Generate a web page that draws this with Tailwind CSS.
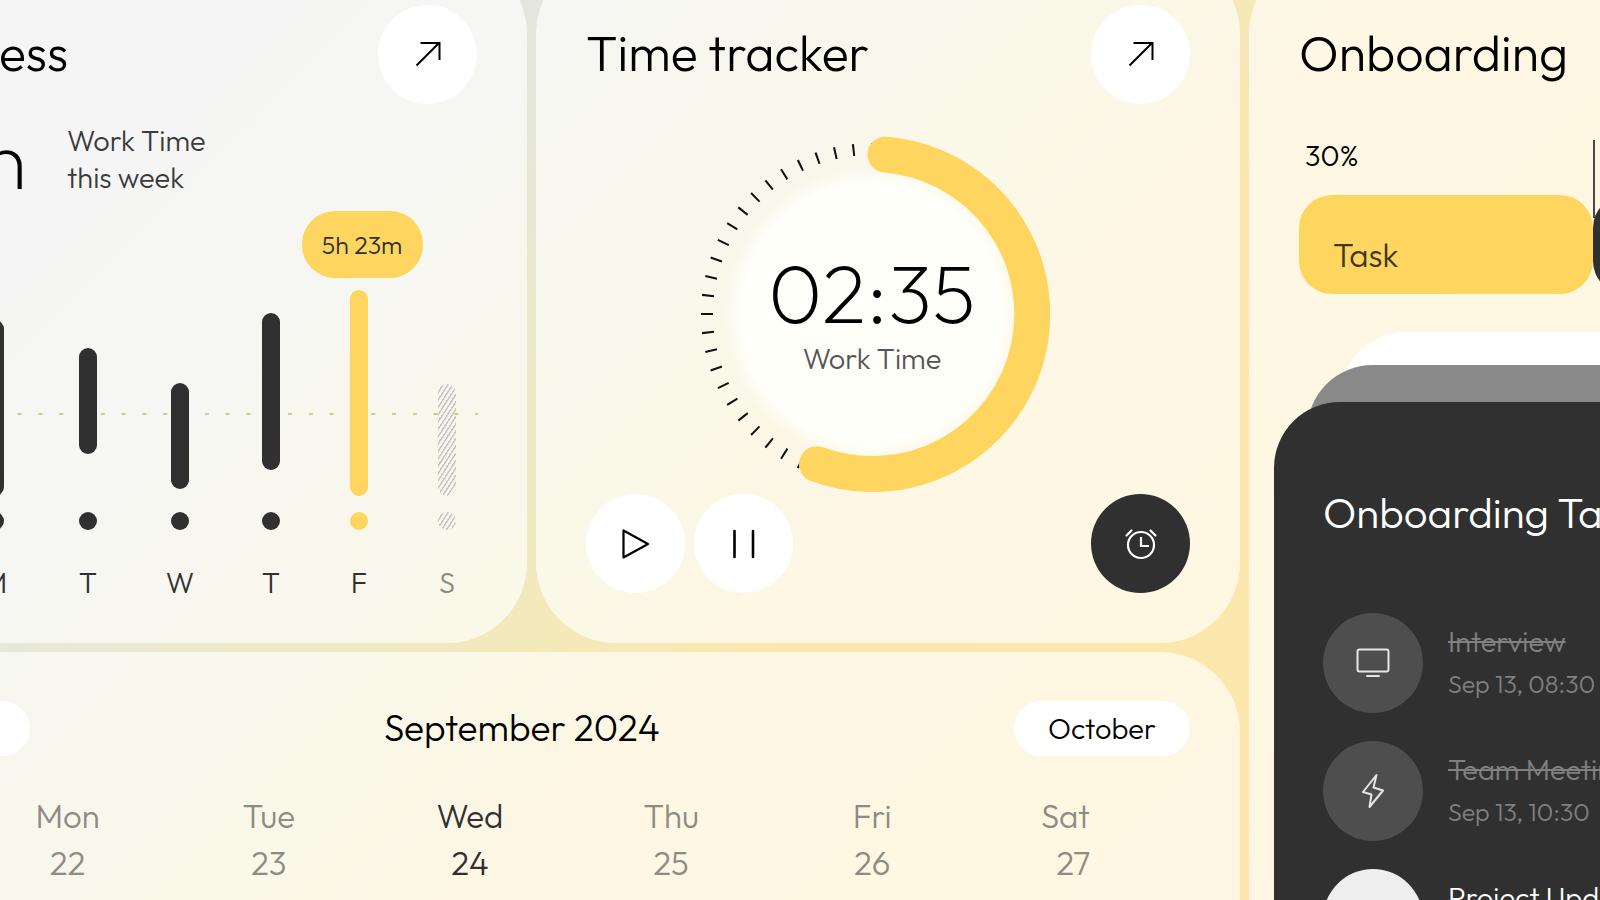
<!DOCTYPE html>
<html lang="en">
<head>
    <meta charset="UTF-8">
    <meta name="viewport" content="width=device-width, initial-scale=1.0">
    <title>HR Dashboard</title>
    <script src="https://cdn.jsdelivr.net/npm/@tailwindcss/browser@4"></script>
</head>
<body class="h-screen overflow-hidden font-['Outfit','Lato',sans-serif] font-light text-black bg-[linear-gradient(135deg,#e2e2e2_0%,#e4e4e0_20%,#e6e8d6_27%,#ece9c9_36%,#f3eaba_47%,#f5e9b6_51%,#fbe7ae_57%,#fde6ab_100%)]">
    <main class="grid grid-cols-3 gap-[9px] -mt-[46px] -ml-[177px] -mr-[353px]">

        <!-- Progress -->
        <section class="flex flex-col h-[689px] rounded-[80px] bg-white/65 p-[50px] pb-10">
            <header class="flex items-center justify-between h-[100px]">
                <h2 class="text-[50px] leading-[60px] pb-0.5">Progress</h2>
                <button aria-label="Open progress" class="size-[99px] rounded-full bg-white flex items-center justify-center">
                    <svg class="size-8" viewBox="0 0 32 32" fill="none" stroke="currentColor" stroke-width="2"><path d="M4.500 27.500 27 5M8.500 5H27.500V22"/></svg>
                </button>
            </header>
            <div class="flex items-end gap-10 mt-3">
                <p class="w-[154px] text-right text-[82px] leading-[86px] whitespace-nowrap font-extralight">6.1 h</p>
                <p class="text-[29px] leading-[37px] pb-1.5 text-[#3a3a3a]">Work Time<br>this week</p>
            </div>
            <div class="relative mt-auto -mx-3.5">
                <svg class="absolute left-0 top-[123px] w-full h-0.5" preserveAspectRatio="none"><line x1="13" y1="1" x2="619" y2="1" stroke="#cccb98" stroke-width="2" stroke-dasharray="4 16.800"/></svg>
                <div class="relative grid grid-cols-[88fr_96fr_90fr_94fr_88fr_88fr_88fr] text-[29px] leading-10 text-[#303030]">
                    <div class="flex flex-col items-center">
                        <div class="h-[206px] flex items-end"><div class="w-[18px] rounded-full bg-[#303030]" style="height: 80px; margin-bottom: 20px"></div></div>
                        <div class="size-[18px] rounded-full bg-[#303030] mt-4 mb-[33px]"></div>
                        <span>S</span>
                    </div>
                    <div class="flex flex-col items-center">
                        <div class="h-[206px] flex items-end"><div class="w-[18px] rounded-full bg-[#303030]" style="height: 176px; margin-bottom: 0"></div></div>
                        <div class="size-[18px] rounded-full bg-[#303030] mt-4 mb-[33px]"></div>
                        <span>M</span>
                    </div>
                    <div class="flex flex-col items-center">
                        <div class="h-[206px] flex items-end"><div class="w-[18px] rounded-full bg-[#303030]" style="height: 106px; margin-bottom: 42px"></div></div>
                        <div class="size-[18px] rounded-full bg-[#303030] mt-4 mb-[33px]"></div>
                        <span>T</span>
                    </div>
                    <div class="flex flex-col items-center">
                        <div class="h-[206px] flex items-end"><div class="w-[18px] rounded-full bg-[#303030]" style="height: 106px; margin-bottom: 7px"></div></div>
                        <div class="size-[18px] rounded-full bg-[#303030] mt-4 mb-[33px]"></div>
                        <span>W</span>
                    </div>
                    <div class="flex flex-col items-center">
                        <div class="h-[206px] flex items-end"><div class="w-[18px] rounded-full bg-[#303030]" style="height: 157px; margin-bottom: 26px"></div></div>
                        <div class="size-[18px] rounded-full bg-[#303030] mt-4 mb-[33px]"></div>
                        <span>T</span>
                    </div>
                    <div class="relative flex flex-col items-center">
                        <div class="absolute bottom-full mb-3 ml-1.5 w-[121px] h-[67px] rounded-[33px] bg-[#fed65f] flex items-center justify-center text-[25px] whitespace-nowrap">5h 23m</div>
                        <div class="h-[206px] flex items-end"><div class="w-[18px] rounded-full bg-[#fed65f]" style="height: 206px; margin-bottom: 0"></div></div>
                        <div class="size-[18px] rounded-full bg-[#fed65f] mt-4 mb-[33px]"></div>
                        <span>F</span>
                    </div>
                    <div class="flex flex-col items-center">
                        <div class="h-[206px] flex items-end"><div class="w-[18px] rounded-full bg-[repeating-linear-gradient(123deg,#c4c4c4_0px,#c4c4c4_1px,transparent_2px,transparent_4px)]" style="height: 112px; margin-bottom: 0"></div></div>
                        <div class="size-[18px] rounded-full bg-[repeating-linear-gradient(123deg,#c4c4c4_0px,#c4c4c4_1px,transparent_2px,transparent_4px)] mt-4 mb-[33px]"></div>
                        <span class="text-[#8a8a80]">S</span>
                    </div>
                </div>
            </div>
        </section>

        <!-- Time tracker -->
        <section class="flex flex-col h-[689px] rounded-[80px] bg-white/65 p-[50px]">
            <header class="flex items-center justify-between h-[100px]">
                <h2 class="text-[50px] leading-[60px] pb-0.5">Time tracker</h2>
                <button aria-label="Open time tracker" class="size-[99px] rounded-full bg-white flex items-center justify-center">
                    <svg class="size-8" viewBox="0 0 32 32" fill="none" stroke="currentColor" stroke-width="2"><path d="M4.500 27.500 27 5M8.500 5H27.500V22"/></svg>
                </button>
            </header>
            <div class="flex justify-center mt-8 pr-8">
                <div class="relative size-[356px]">
                    <svg class="size-full" viewBox="-178 -178 356 356" fill="none">
                        <defs>
                            <radialGradient id="glow">
                                <stop offset="0" stop-color="#fffffa"/>
                                <stop offset=".88" stop-color="#fffffa"/>
                                <stop offset="1" stop-color="#fffffa" stop-opacity="0"/>
                            </radialGradient>
                        </defs>
                        <circle r="148" fill="url(#glow)"/>
                        <!-- 56 ticks around the dial -->
                        <circle r="165" stroke="#111" stroke-width="12" pathLength="56" stroke-dasharray=".11 .89" stroke-dashoffset=".055"/>
                        <path d="M13.400 -159.400A160 160 0 1 1 -55 150.200" stroke="#fed65f" stroke-width="36" stroke-linecap="round"/>
                    </svg>
                    <div class="absolute inset-0 flex flex-col items-center pt-[109px]">
                        <span class="text-[82px] leading-[96px] font-extralight">02:35</span>
                        <span class="text-[29px] leading-9 text-[#555]">Work Time</span>
                    </div>
                </div>
            </div>
            <div class="flex gap-[9px] mt-auto">
                <button aria-label="Start" class="size-[99px] rounded-full bg-white flex items-center justify-center">
                    <svg class="size-8" viewBox="0 0 32 32" fill="none" stroke="currentColor" stroke-width="2.200" stroke-linejoin="round"><path d="M3.500 2.500V29.500L28 16Z"/></svg>
                </button>
                <button aria-label="Pause" class="size-[99px] rounded-full bg-white flex items-center justify-center">
                    <svg class="size-8" viewBox="0 0 32 32" fill="none" stroke="currentColor" stroke-width="2.600" stroke-linecap="round"><path d="M6.500 3V29M25 3V29"/></svg>
                </button>
                <button aria-label="Set alarm" class="size-[99px] rounded-full bg-[#303030] text-white flex items-center justify-center ml-auto">
                    <svg class="size-9" viewBox="0 0 36 36" fill="none" stroke="currentColor" stroke-width="2.200"><circle cx="18" cy="19" r="13"/><path d="M18 11V20H26"/><path d="M3.500 9.500 8.500 4.500M32.500 9.500 27.500 4.500" stroke-linecap="round"/></svg>
                </button>
            </div>
        </section>

        <!-- Onboarding -->
        <section class="row-span-2 rounded-[80px] bg-white/65 pt-[50px]">
            <div class="px-[50px]">
                <header class="flex items-center h-[100px]">
                    <h2 class="text-[50px] leading-[60px] pb-0.5">Onboarding</h2>
                </header>
                <div class="grid grid-cols-[294fr_310fr] mt-9">
                    <span class="px-1.5 text-[29px] leading-8 h-[55px]">30%</span>
                    <span class="border-l-2 border-[#4a4742] h-[78px] px-1.5 text-[29px] leading-8">25%</span>
                    <div class="-mt-[23px] h-[99px] rounded-[33px] bg-[#fed65f] px-[34px] pt-10 text-[33px] leading-10 text-[#40371c]">Task</div>
                    <div class="-mt-[23px] h-[99px] rounded-[33px] bg-[#303030]"></div>
                </div>
            </div>
            <div class="mt-[38px] px-[25px]">
                <div class="mx-[66px] h-[100px] rounded-t-[66px] bg-white"></div>
                <div class="mx-[33px] -mt-[67px] h-[100px] rounded-t-[66px] bg-[#898989]"></div>
                <div class="-mt-[63px] rounded-t-[66px] bg-[#303030] px-[49px] pt-[85px] pb-16">
                    <h3 class="text-[42px] leading-[52px] text-white">Onboarding Task</h3>
                    <ul class="flex flex-col gap-7 mt-[74px] text-[#808080]">
                        <li class="flex items-center gap-[25px]">
                            <span class="size-[100px] rounded-full bg-[#4e4e4e] text-[#e6e6e6] flex items-center justify-center">
                                <svg class="size-9" viewBox="0 0 36 36" fill="none" stroke="currentColor" stroke-width="2"><rect x="2.500" y="4.500" width="31" height="22" rx="2"/><path d="M12 31H24" stroke-linecap="round"/></svg>
                            </span>
                            <div>
                                <p class="text-[29px] leading-[42px] line-through">Interview</p>
                                <p class="text-[25px] leading-[42px]">Sep 13, 08:30</p>
                            </div>
                        </li>
                        <li class="flex items-center gap-[25px]">
                            <span class="size-[100px] rounded-full bg-[#4e4e4e] text-[#e6e6e6] flex items-center justify-center">
                                <svg class="size-9" viewBox="0 0 36 36" fill="none" stroke="currentColor" stroke-width="2" stroke-linejoin="round"><path d="M21.500 2 18.500 14.500 28 17.500 14.500 34 16.500 21.500 8 19Z"/></svg>
                            </span>
                            <div>
                                <p class="text-[29px] leading-[42px] line-through">Team Meeting</p>
                                <p class="text-[25px] leading-[42px]">Sep 13, 10:30</p>
                            </div>
                        </li>
                        <li class="flex items-center gap-[25px]">
                            <span class="size-[100px] rounded-full bg-[#eee]"></span>
                            <div>
                                <p class="text-[29px] leading-[42px] text-white">Project Update</p>
                                <p class="text-[25px] leading-[42px]">Sep 13, 13:00</p>
                            </div>
                        </li>
                    </ul>
                </div>
            </div>
        </section>

        <!-- Calendar -->
        <section class="col-span-2 rounded-[80px] bg-white/65 px-[50px] pt-[49px] pb-40">
            <header class="flex items-center justify-between">
                <button class="h-[55px] px-[34px] rounded-full bg-white text-[29px]">August</button>
                <h2 class="text-[37px] leading-[48px] pb-0.5">September 2024</h2>
                <button class="h-[55px] px-[34px] rounded-full bg-white text-[29px]">October</button>
            </header>
            <div class="mt-[37px] pr-4">
                <table class="w-full table-fixed text-center text-[33px] leading-[47px] text-[#8d8c84]">
                    <thead>
                        <tr>
                            <td class="w-[94px]"></td>
                            <th class="font-light">Mon</th>
                            <th class="font-light">Tue</th>
                            <th class="font-light text-[#303030]">Wed</th>
                            <th class="font-light">Thu</th>
                            <th class="font-light">Fri</th>
                            <th class="font-light pr-4">Sat</th>
                        </tr>
                    </thead>
                    <tbody>
                        <tr>
                            <td></td>
                            <td>22</td>
                            <td>23</td>
                            <td class="text-[#303030]">24</td>
                            <td>25</td>
                            <td>26</td>
                            <td>27</td>
                        </tr>
                    </tbody>
                </table>
            </div>
        </section>
    </main>
</body>
</html>
